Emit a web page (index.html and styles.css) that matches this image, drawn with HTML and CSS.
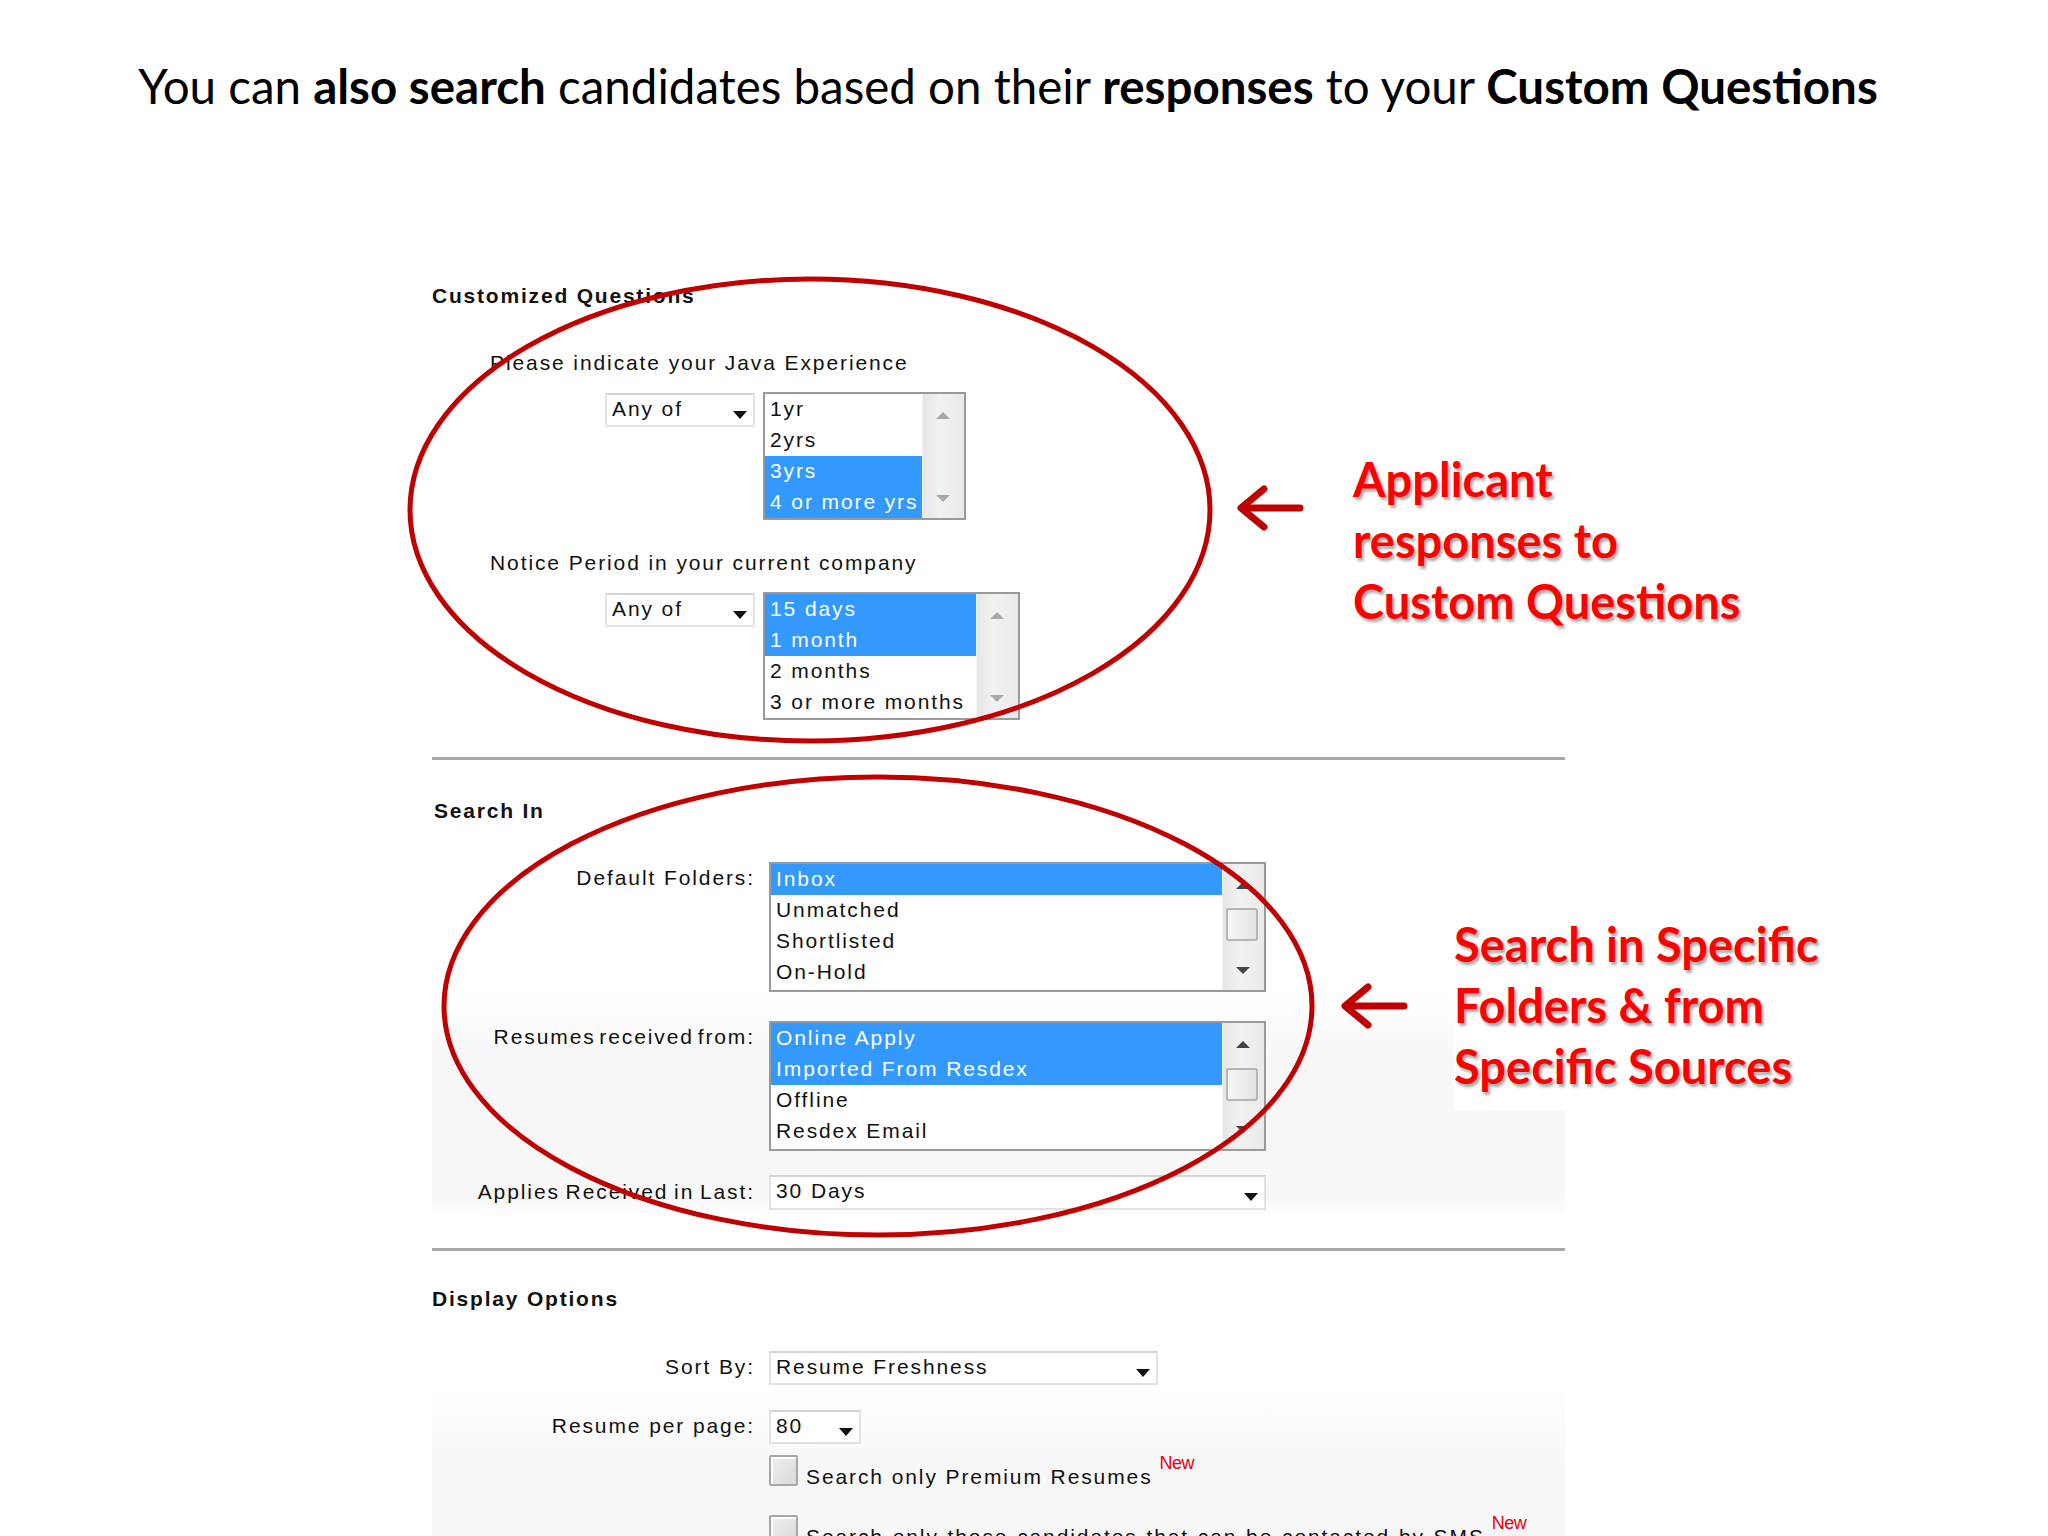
FILE: index.html
```html
<!DOCTYPE html>
<html>
<head>
<meta charset="utf-8">
<link rel="stylesheet" href="styles.css">
</head>
<body>
<div class="slide">
  <h1 class="title">You can <b>also search</b> candidates based on their <b>responses</b> to your <b>Custom Questions</b></h1>

  <div class="form">
    <div class="heading">Customized Questions</div>

    <div class="question">Please indicate your Java Experience</div>
    <div class="qrow">
      <div class="select sel-any"><span>Any of</span><i class="caret"></i></div>
      <div class="listbox lb1">
        <div class="items">
          <div class="item">1yr</div>
          <div class="item">2yrs</div>
          <div class="item on">3yrs</div>
          <div class="item on">4 or more yrs</div>
        </div>
        <div class="scroll light"><i class="up"></i><i class="down"></i></div>
      </div>
    </div>

    <div class="question q2">Notice Period in your current company</div>
    <div class="qrow">
      <div class="select sel-any"><span>Any of</span><i class="caret"></i></div>
      <div class="listbox lb2">
        <div class="items">
          <div class="item on">15 days</div>
          <div class="item on">1 month</div>
          <div class="item">2 months</div>
          <div class="item">3 or more months</div>
        </div>
        <div class="scroll light"><i class="up"></i><i class="down"></i></div>
      </div>
    </div>

    <hr class="sep">

    <div class="heading h-search">Search In</div>

    <div class="frow r-folders">
      <div class="label">Default Folders:</div>
      <div class="listbox lb3">
        <div class="items">
          <div class="item on">Inbox</div>
          <div class="item">Unmatched</div>
          <div class="item">Shortlisted</div>
          <div class="item">On-Hold</div>
        </div>
        <div class="scroll"><i class="up"></i><i class="thumb t3"></i><i class="down"></i></div>
      </div>
    </div>

    <div class="shade">
      <div class="frow r-sources">
        <div class="label tight">Resumes received from:</div>
        <div class="listbox lb3">
          <div class="items">
            <div class="item on">Online Apply</div>
            <div class="item on">Imported From Resdex</div>
            <div class="item">Offline</div>
            <div class="item">Resdex Email</div>
          </div>
          <div class="scroll"><i class="up"></i><i class="thumb t4"></i><i class="down"></i></div>
        </div>
      </div>

      <div class="frow r-applies">
        <div class="label semi">Applies Received in Last:</div>
        <div class="select sel-wide"><span>30 Days</span><i class="caret"></i></div>
      </div>
    </div>

    <hr class="sep sep2">

    <div class="heading h-display">Display Options</div>

    <div class="frow r-sort">
      <div class="label">Sort By:</div>
      <div class="select sel-sort"><span>Resume Freshness</span><i class="caret"></i></div>
    </div>

    <div class="shade2">
      <div class="frow r-per">
        <div class="label">Resume per page:</div>
        <div class="select sel-per"><span>80</span><i class="caret"></i></div>
      </div>

      <div class="frow r-check">
        <div class="label"></div>
        <div class="check"><i class="box"></i><span>Search only Premium Resumes</span><sup class="new">New</sup></div>
      </div>

      <div class="frow r-check2">
        <div class="label"></div>
        <div class="check"><i class="box"></i><span class="sms">Search only those candidates that can be contacted by SMS</span><sup class="new">New</sup></div>
      </div>
    </div>
  </div>

  <svg class="marks" width="2048" height="1536" viewBox="0 0 2048 1536">
    <ellipse cx="810" cy="510" rx="400" ry="231" fill="none" stroke="#c00000" stroke-width="5"/>
    <ellipse cx="878" cy="1006" rx="434" ry="229" fill="none" stroke="#c00000" stroke-width="5"/>
    <g fill="none" stroke="#c00000" stroke-width="7" stroke-linecap="round" stroke-linejoin="round">
      <path d="M1300 508 H1242"/>
      <path d="M1264 489 L1241 508 L1264 527"/>
      <path d="M1404 1006 H1346"/>
      <path d="M1368 987 L1345 1006 L1368 1025"/>
    </g>
  </svg>

  <div class="callout c1">Applicant<br>responses to<br>Custom Questions</div>
  <div class="callout c2">Search in Specific<br>Folders &amp; from<br>Specific Sources</div>
</div>
</body>
</html>
```

FILE: styles.css
```css
html, body {
  margin: 0;
  padding: 0;
  background: #ffffff;
}

.slide {
  position: relative;
  width: 2048px;
  height: 1536px;
  overflow: hidden;
  background: #ffffff;
  font-family: "Liberation Sans", Arial, sans-serif;
  color: #111;
}

.title {
  margin: 0;
  padding: 51px 32px 0 0;
  height: 70px;
  line-height: 70px;
  text-align: center;
  font-family: Lato, "Open Sans", sans-serif;
  font-weight: 400;
  font-size: 47.5px;
  color: #000;
  white-space: nowrap;
}

.title b {
  font-weight: 700;
}

.form {
  margin: 160px 0 0 432px;
  width: 1133px;
  font-size: 21px;
  letter-spacing: 1.9px;
}

.heading {
  font-weight: 700;
  height: 30px;
  line-height: 30px;
  letter-spacing: 1.8px;
}

.question {
  margin: 37px 0 0 58px;
  height: 30px;
  line-height: 30px;
}

.question.q2 {
  margin-top: 28px;
}

.qrow {
  display: flex;
  align-items: flex-start;
  gap: 8px;
  margin: 14px 0 0 173px;
}

/* select boxes */
.select {
  position: relative;
  box-sizing: border-box;
  height: 34px;
  background: #fff;
  border: 2px solid #e2e2e2;
  border-top-color: #d4d4d4;
  line-height: 28px;
  padding-left: 5px;
  margin-top: 1px;
}

.select span {
  display: block;
}

.caret {
  position: absolute;
  right: 6px;
  top: 16px;
  width: 0;
  height: 0;
  border-left: 7px solid transparent;
  border-right: 7px solid transparent;
  border-top: 8px solid #111;
}

.sel-any {
  width: 150px;
}

.sel-wide {
  width: 497px;
  height: 35px;
}

.sel-sort {
  width: 389px;
}

.sel-per {
  width: 92px;
}

/* list boxes */
.listbox {
  display: flex;
  box-sizing: border-box;
  border: 2px solid #9a9a9a;
  background: #fff;
  height: 128px;
}

.items {
  flex: 1;
}

.item {
  height: 31px;
  line-height: 30px;
  padding-left: 5px;
  white-space: nowrap;
}

.item.on {
  background: #3399ff;
  color: #fff;
}

.lb1 {
  width: 203px;
}

.lb2 {
  width: 257px;
}

.lb3 {
  width: 497px;
  height: 130px;
}

.scroll {
  position: relative;
  width: 41px;
  background: linear-gradient(to right, #e6e6e6, #f2f2f2 40%, #eaeaea);
  border-left: 1px solid #f4f4f4;
}

.scroll .up,
.scroll .down {
  position: absolute;
  left: 13px;
  width: 0;
  height: 0;
  border-left: 7px solid transparent;
  border-right: 7px solid transparent;
}

.scroll .up {
  top: 18px;
  border-bottom: 7px solid #444;
}

.scroll .down {
  bottom: 16px;
  border-top: 7px solid #444;
}

.scroll.light .up {
  border-bottom-color: #a8a8a8;
}

.scroll.light .down {
  border-top-color: #a8a8a8;
}

.thumb {
  position: absolute;
  left: 3px;
  width: 32px;
  height: 33px;
  box-sizing: border-box;
  border: 2px solid #b5b5b5;
  border-radius: 3px;
  background: linear-gradient(to right, #f6f6f6, #e4e4e4);
}

.t3 {
  top: 44px;
}

.t4 {
  top: 45px;
}

hr.sep {
  margin: 37px 0 0 0;
  border: 0;
  height: 3px;
  background: #a9a9a9;
}

hr.sep2 {
  margin-top: 32px;
}

.h-search {
  margin-top: 36px;
  padding-left: 2px;
}

.h-display {
  margin-top: 33px;
}

/* form rows with right aligned labels */
.frow {
  display: grid;
  grid-template-columns: 323px auto;
  column-gap: 14px;
  align-items: start;
}

.label {
  text-align: right;
  line-height: 31px;
  white-space: nowrap;
}

.label.tight {
  word-spacing: -4px;
}

.label.semi {
  word-spacing: -2px;
}

.r-folders {
  margin-top: 36px;
}

.shade {
  background: linear-gradient(to bottom, #ffffff 0%, #f7f7f7 30%, #f7f7f7 92%, #ffffff 100%);
  padding-top: 29px;
  padding-bottom: 6px;
}

.r-applies {
  margin-top: 23px;
}

.r-applies .label {
  line-height: 35px;
}

.r-sort {
  margin-top: 36px;
}

.r-sort .label,
.r-per .label {
  line-height: 34px;
}

.shade2 {
  background: linear-gradient(to bottom, #ffffff 0%, #f7f7f7 40%);
  padding-top: 24px;
  padding-bottom: 40px;
}

.r-check {
  margin-top: 11px;
}

.r-check2 {
  margin-top: 26px;
}

.check {
  display: flex;
  align-items: flex-start;
  gap: 8px;
  white-space: nowrap;
}

.check .box {
  display: block;
  flex: none;
  width: 29px;
  height: 31px;
  box-sizing: border-box;
  border: 2px solid #a8a8a8;
  border-radius: 2px;
  background: linear-gradient(to bottom right, #f0f0f0, #d9d9d9);
  box-shadow: inset 2px 2px 0 #fff;
}

.check span {
  line-height: 24px;
  margin-top: 10px;
}

.check .sms {
  word-spacing: 1px;
}

.check .new {
  margin-left: -1px;
  margin-top: -2px;
  font-size: 18px;
  line-height: 20px;
  letter-spacing: -0.6px;
  color: #e8000b;
}

/* annotation overlays */
.marks {
  position: absolute;
  left: 0;
  top: 0;
  pointer-events: none;
}

.callout {
  position: absolute;
  font-family: Lato, "Open Sans", sans-serif;
  font-weight: 700;
  font-size: 47px;
  line-height: 61px;
  color: #ff0000;
  text-shadow: 2px 3px 3px rgba(0, 0, 0, 0.35);
  white-space: nowrap;
  background: #fff;
}

.c1 {
  left: 1353px;
  top: 449px;
}

.c2 {
  left: 1454px;
  top: 914px;
  padding: 0 30px 14px 0;
}
```
